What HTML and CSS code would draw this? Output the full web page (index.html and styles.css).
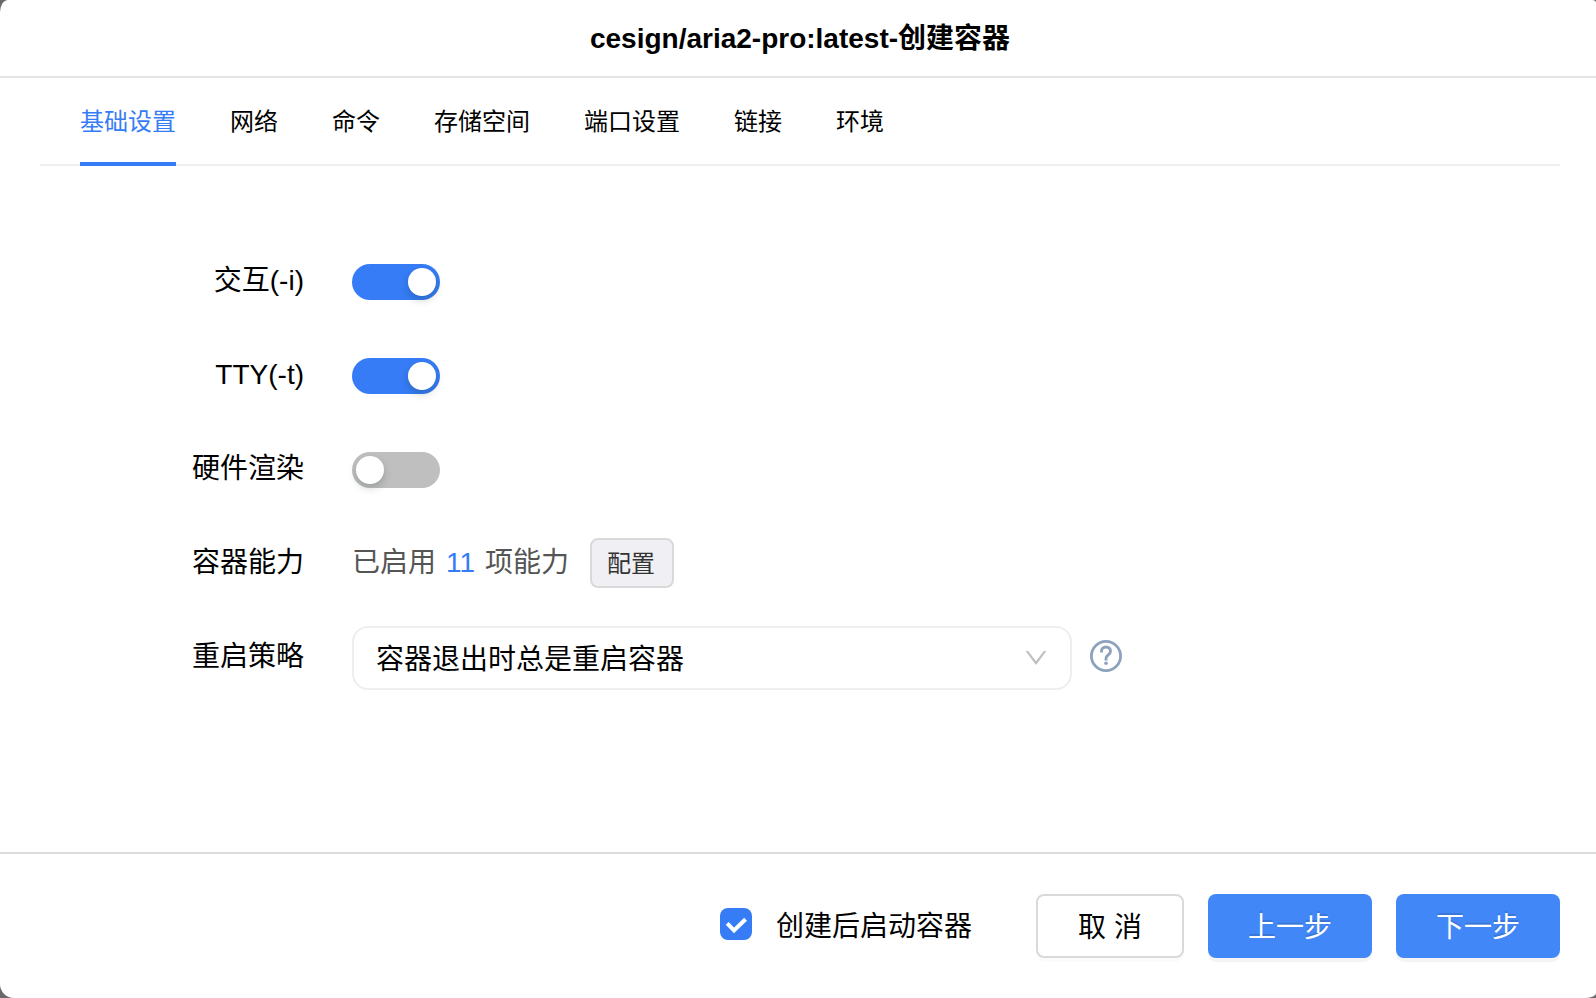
FILE: index.html
```
<!DOCTYPE html>
<html lang="zh-CN">
<head>
<meta charset="utf-8">
<title>创建容器</title>
<link rel="stylesheet" href="styles.css">
</head>
<body>
<div class="dialog">
  <header class="header"><h1 class="title">cesign/aria2-pro:latest-创建容器</h1></header>
  <nav class="tabs">
    <a class="tab active">基础设置</a>
    <a class="tab">网络</a>
    <a class="tab">命令</a>
    <a class="tab">存储空间</a>
    <a class="tab">端口设置</a>
    <a class="tab">链接</a>
    <a class="tab">环境</a>
  </nav>
  <main class="form">
    <div class="row"><label class="label">交互(-i)</label><span class="switch on"><i class="knob"></i></span></div>
    <div class="row"><label class="label">TTY(-t)</label><span class="switch on"><i class="knob"></i></span></div>
    <div class="row"><label class="label">硬件渲染</label><span class="switch"><i class="knob"></i></span></div>
    <div class="row">
      <label class="label">容器能力</label>
      <div class="caps"><span>已启用</span><span class="count">11</span><span>项能力</span></div>
      <button class="small-button">配置</button>
    </div>
    <div class="row">
      <label class="label">重启策略</label>
      <div class="select">
        <span class="value">容器退出时总是重启容器</span>
        <svg class="chevron" width="22" height="16" viewBox="0 0 22 16"><path d="M0.6 1H3.2L11 11.2L18.8 1H21.4L11.6 14.2Q11 15 10.4 14.2Z" fill="#bfbfbf"/></svg>
      </div>
      <svg class="help" width="32" height="32" viewBox="0 0 32 32" fill="none" stroke="#8ca2bd"><circle cx="16" cy="16" r="14.6" stroke-width="2.8"/><path d="M11.5 12.6V11.2C11.5 8.6 13.4 7 16 7S20.5 8.6 20.5 11.2C20.5 14.8 16 15 16 18.4V20.6" stroke-width="2.9"/><circle cx="16" cy="23.2" r="1.8" fill="#8ca2bd" stroke="none"/></svg>
    </div>
  </main>
  <footer class="footer">
    <span class="checkbox"><svg width="32" height="32" viewBox="0 0 32 32"><path d="M7.2 15.4L14 22.4L25.6 11.2" fill="none" stroke="#fff" stroke-width="4"/></svg></span>
    <span class="check-label">创建后启动容器</span>
    <button class="button cancel"><span>取</span><span>消</span></button>
    <button class="button primary">上一步</button>
    <button class="button primary">下一步</button>
  </footer>
</div>
</body>
</html>
```
FILE: styles.css
```
* { box-sizing: border-box; }
body {
  margin: 0;
  background: #69696b;
  color: #000;
  font-family: "Liberation Sans", "Noto Sans CJK SC", sans-serif;
  font-size: 28px;
  line-height: 40px;
}
button { font: inherit; padding: 0; margin: 0; }
.dialog {
  width: 1596px;
  height: 998px;
  display: flex;
  flex-direction: column;
  background: #fff;
  border-radius: 8px 4px 10px 14px / 12px 3px 5px 14px;
  overflow: hidden;
}
.header {
  height: 78px;
  flex: none;
  display: flex;
  justify-content: center;
  padding: 19px 0 0 4px;
  border-bottom: 2px solid #e4e4e4;
}
.title { margin: 0; font-size: 28px; font-weight: 700; line-height: 40px; }
.tabs {
  height: 88px;
  flex: none;
  display: flex;
  gap: 54px;
  margin: 0 36px 0 40px;
  padding-left: 40px;
  border-bottom: 2px solid #f0f0f0;
  font-size: 24px;
}
.tab { height: 88px; padding-top: 24px; }
.tab.active { color: #367cf6; border-bottom: 4px solid #367cf6; }
.form { flex: 1; padding-top: 69px; }
.row { height: 94px; display: flex; align-items: center; }
.label { width: 304px; margin-right: 48px; padding-bottom: 2px; text-align: right; }
.switch {
  width: 88px;
  height: 36px;
  padding: 4px;
  display: flex;
  border-radius: 18px;
  background: #bfbfbf;
}
.switch.on { justify-content: flex-end; background: #367cf6; }
.knob {
  width: 28px;
  height: 28px;
  border-radius: 50%;
  background: #fff;
  box-shadow: 0 4px 8px rgba(0, 35, 11, .2);
}
.caps { display: flex; gap: 10px; width: 238px; padding-bottom: 2px; color: #555; white-space: nowrap; }
.count { color: #367cf6; }
.small-button {
  width: 84px;
  height: 50px;
  margin-bottom: 2px;
  padding: 2px 2px 0 0;
  border: 2px solid #d9d9d9;
  border-radius: 8px;
  background: #efeff4;
  color: #333;
  font-size: 24px;
}
.select {
  width: 720px;
  height: 64px;
  display: flex;
  align-items: center;
  justify-content: space-between;
  padding: 0 23px 0 22px;
  border: 2px solid #eee;
  border-radius: 16px;
}
.value { padding-top: 3px; }
.help { margin: 0 0 4px 18px; }
.footer {
  height: 146px;
  flex: none;
  display: flex;
  align-items: flex-start;
  justify-content: flex-end;
  padding: 40px 36px 0 0;
  border-top: 2px solid #dcdcdc;
}
.checkbox {
  width: 32px;
  height: 32px;
  margin-top: 14px;
  border-radius: 8px;
  background: #367cf6;
}
.checkbox svg { display: block; }
.check-label { margin: 13px 64px 0 24px; }
.button { height: 64px; padding-top: 3px; border-radius: 8px; }
.cancel {
  width: 148px;
  display: flex;
  justify-content: center;
  align-items: center;
  gap: 8px;
  border: 2px solid #d9d9d9;
  background: #fff;
  color: #000;
  box-shadow: 0 4px 0 rgba(0, 0, 0, .016);
}
.primary {
  width: 164px;
  margin-left: 24px;
  border: 0;
  background: #4187f7;
  color: #fff;
  text-shadow: 0 -2px 0 rgba(0, 0, 0, .12);
  box-shadow: 0 4px 0 rgba(0, 0, 0, .045);
}
```
